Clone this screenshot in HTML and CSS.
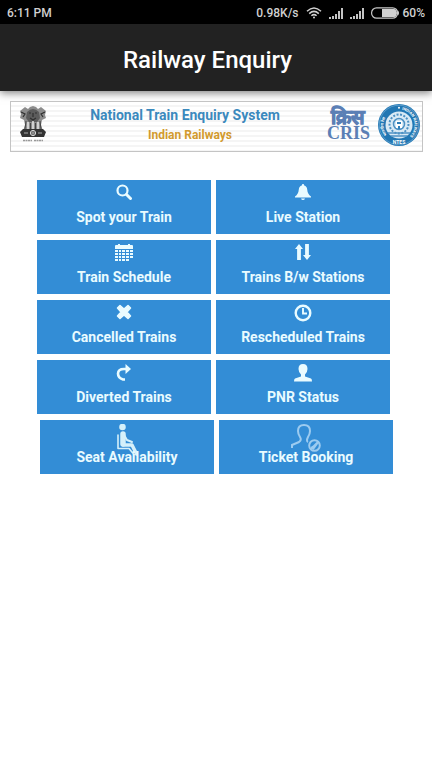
FILE: index.html
```html
<!DOCTYPE html>
<html lang="en">
<head>
<meta charset="utf-8">
<meta name="viewport" content="width=device-width, initial-scale=1">
<title>Railway Enquiry</title>
<link rel="stylesheet" href="styles.css">
</head>
<body>
<div class="status">
  <span class="clock">6:11 PM</span>
  <span>0.98K/s</span>
  <svg class="wifi" width="16" height="12" viewBox="0 0 16 12" fill="none" stroke="#d0d0d0" stroke-width="1.5"><path d="M1 4.300Q8-2.300 15 4.300M3.200 6.600Q8 2.200 12.800 6.600M5.400 8.800Q8 6.400 10.600 8.800"/><circle cx="8" cy="10.500" r="1" fill="#d0d0d0" stroke="none"/></svg>
  <svg class="signal" width="15" height="11" viewBox="0 0 15 11" fill="#c4c4c4"><path d="M0 9h2v2H0zM3 8h2v3H3zM6 6h2v5H6zM9 3h2v8H9zM12 0h2v11h-2z"/></svg>
  <svg class="signal" width="15" height="11" viewBox="0 0 15 11" fill="#c4c4c4"><path d="M0 9h2v2H0zM3 8h2v3H3zM6 6h2v5H6zM9 3h2v8H9zM12 0h2v11h-2z"/></svg>
  <svg class="battery" width="29" height="12" viewBox="0 0 29 12"><rect x=".6" y=".8" width="26" height="10.400" rx="5" fill="none" stroke="#c8c8c8" stroke-width="1.200"/><path d="M11 2h12.500q2.500 1 2.500 4t-2.500 4H11z" fill="#d0d0d0"/><path d="M27 3.500q2 2.500 0 5z" fill="#d0d0d0"/></svg>
  <span>60%</span>
</div>
<header class="bar"><h1>Railway Enquiry</h1></header>
<main>
  <section class="banner">
    <svg class="emblem" width="28" height="38" viewBox="0 0 28 38" role="img" aria-label="State emblem">
      <path d="M1 5l5-4 3 2 2-2 3-1 3 1 2 2 3-2 5 4-1 4 1 3-4 2-1 5 2 6H4l2-6-1-5-4-2 1-4z" fill="#8c8c8c"/>
      <path d="M8 6q6-6 12 0l1 6-3 4h-8l-3-4z" fill="#5c5c5c"/>
      <path d="M2 6l4 2-2 3M26 6l-4 2 2 3M10 7h2M16 7h2M11 12l3 2 3-2M14 7v4" fill="none" stroke="#303030" stroke-width="1.200"/>
      <path d="M9 16v7M14 15v8M19 16v7" stroke="#eee" stroke-width="1.400"/>
      <path d="M7 15l-1 8M11.500 17v6M16.500 17v6M21 15l1 8" stroke="#444" stroke-width="1"/>
      <path d="M4 23h20l3 3-2 5H3l-2-5z" fill="#333"/>
      <circle cx="14" cy="27" r="2.600" fill="none" stroke="#ddd" stroke-width="1"/>
      <path d="M5 27h4M19 27h4M14 25v4M12 27h4" stroke="#aaa" stroke-width="1"/>
      <path d="M4 34.500h9M15 34.500h9" stroke="#999" stroke-width="1.500" stroke-dasharray="2 .5"/>
    </svg>
    <div class="names">
      <h2>National Train Enquiry System</h2>
      <p>Indian Railways</p>
    </div>
    <div class="cris"><span class="hindi" lang="hi">क्रिस</span><span>CRIS</span></div>
    <svg class="seal" width="42" height="42" viewBox="0 0 42 42" role="img" aria-label="NTES">
      <defs><path id="left" d="M9 30.800A15.500 15.500 0 0 1 19.500 5.600"/><path id="right" d="M24 5.800A15.500 15.500 0 0 1 31 32.900"/></defs>
      <circle cx="21" cy="21" r="21" fill="#2277b3"/>
      <circle cx="21" cy="21" r="19.800" fill="none" stroke="#7db4da" stroke-width=".6"/>
      <circle cx="21" cy="21" r="13.500" fill="#d9eaf5"/>
      <g fill="none" stroke="#4d91c3"><circle cx="21" cy="20" r="9.500" stroke-width="2" stroke-dasharray="2 1.500"/><circle cx="21" cy="20" r="5.500" stroke-width="1.500"/><path d="M10 29h22M13 32h16" stroke-width="1.500"/></g>
      <path d="M18 17h6v7h-6z" fill="#fff"/><path d="M19 18h4v2h-4zM20 22h2v3h-2z" fill="#2e7eb8"/>
      <g class="seal-text"><text lang="hi"><textPath href="#left">भारतीय रेल</textPath></text><text><textPath href="#right">INDIAN RAILWAYS</textPath></text><text class="seal-name" x="21" y="40" text-anchor="middle">NTES</text></g>
      <circle cx="21" cy="3.800" r="1" fill="#fff"/>
    </svg>
  </section>
  <nav class="menu">
    <div class="row">
      <button type="button"><svg width="16" height="16" viewBox="0 0 16 16" fill="none" stroke="currentColor"><circle cx="6.500" cy="6.500" r="5" stroke-width="2.200"/><path d="M10.500 10.500l4 4" stroke-width="3" stroke-linecap="round"/></svg><span>Spot your Train</span></button>
      <button type="button"><svg width="16" height="16" viewBox="0 0 16 16" fill="currentColor"><path d="M8 0q1.200 0 1.200 1.400Q12 2.200 12.200 5.500 12.500 10 16 12.500v1H0v-1Q3.500 10 3.800 5.500 4 2.200 6.800 1.400 6.800 0 8 0zM6 14.500h4Q9.500 16 8 16t-2-1.500z"/></svg><span>Live Station</span></button>
    </div>
    <div class="row">
      <button type="button"><svg width="18" height="17" viewBox="0 0 18 17" fill="currentColor"><path d="M1 1h2V0h2v1h8V0h2v1h2q1 0 1 1v3H0V2q0-1 1-1zM0 6h3v2H0zM4 6h2v2H4zM7 6h3v2H7zM11 6h3v2h-3zM15 6h3v2h-3zM0 9h3v2H0zM4 9h2v2H4zM7 9h3v2H7zM11 9h3v2h-3zM15 9h3v2h-3zM0 12h3v2H0zM4 12h2v2H4zM7 12h3v2H7zM11 12h3v2h-3zM15 12h3v2h-3zM0 15h3v2H0zM4 15h2v2H4zM7 15h3v2H7zM11 15h3v2h-3z"/></svg><span>Train Schedule</span></button>
      <button type="button"><svg width="16" height="16" viewBox="0 0 16 16" fill="currentColor"><path d="M4 0l4 5H5.900v11H2.100V5H0zM12 16l4-5h-2.100V0h-3.800v11H8z"/></svg><span>Trains B/w Stations</span></button>
    </div>
    <div class="row">
      <button type="button"><svg width="16" height="16" viewBox="0 0 16 16" fill="currentColor" stroke="currentColor" stroke-linejoin="round"><path d="M4 1.500L8 5l4-3.500L14.500 4 11 8l3.500 4-2.500 2.500L8 11l-4 3.500L1.500 12 5 8 1.500 4z" stroke-width="1.500"/></svg><span>Cancelled Trains</span></button>
      <button type="button"><svg width="18" height="18" viewBox="0 0 18 18" fill="none" stroke="currentColor"><circle cx="9" cy="9" r="7.300" stroke-width="2.400"/><path d="M9 4v5.500h4" stroke-width="1.900"/></svg><span>Rescheduled Trains</span></button>
    </div>
    <div class="row">
      <button type="button"><svg width="16" height="18" viewBox="0 0 16 18"><path d="M9 15.500H7Q2 14 2 9.500 2.200 5 8 5h3" fill="none" stroke="currentColor" stroke-width="2.600"/><path d="M9.500 0l5.500 5-5.500 5z" fill="currentColor"/></svg><span>Diverted Trains</span></button>
      <button type="button"><svg width="18" height="18" viewBox="0 0 18 18" fill="currentColor"><path d="M9 0q4.500 0 4.500 5 0 3-2.500 5.500v2l6 2q1 .5 1 3H0q0-2.500 1-3l6-2v-2Q4.500 8 4.500 5 4.500 0 9 0z"/></svg><span>PNR Status</span></button>
    </div>
    <div class="row shifted">
      <button type="button"><svg class="tall" width="22" height="32" viewBox="0 0 22 32" fill="none" stroke="#d5f0fa" stroke-linecap="round" stroke-linejoin="round"><circle cx="6.500" cy="3" r="3.300" fill="#d5f0fa" stroke="none"/><path d="M7 10v10" stroke-width="5.500"/><path d="M2 11v13.500h11l5 6" stroke-width="1.600"/><path d="M7 21h9l4.500 9" stroke-width="3.500"/><path d="M8 11l3 5 5 2" stroke-width="2"/></svg><span>Seat Availability</span></button>
      <button type="button"><svg class="tall" width="30" height="32" viewBox="0 0 30 32" fill="none" stroke="#9ccbf0" stroke-width="2"><path d="M1 24v-3l7-3q3-2 1-5-2-3-2-6Q7 1 13 1t6 6q0 3-2 6-2 4 0 5"/><circle cx="23.500" cy="21.500" r="5.300"/><path d="M20.500 22.500l2 2 4-5.500M20 25l7-7"/></svg><span>Ticket Booking</span></button>
    </div>
  </nav>
</main>
</body>
</html>
```
FILE: styles.css
```css
* { box-sizing: border-box; }
body { margin: 0; background: #fff; font-family: Roboto, "Noto Sans", sans-serif; }
h1, h2, p { margin: 0; }
.status {
  display: flex; align-items: center; height: 24px; padding: 2px 7px 0;
  background: #000; color: #d0d0d0; font-size: 12px; font-weight: 500;
}
.clock { margin-right: auto; }
.wifi { margin-left: 7px; margin-right: 7px; }
.signal { margin-right: 6px; }
.battery { margin-right: 3px; }
.bar {
  display: flex; align-items: center; justify-content: center;
  height: 67px; padding: 5px 17px 0 0;
  background: #222; color: #fff; box-shadow: 0 2px 8px rgba(0, 0, 0, .5);
}
.bar h1 { font-size: 24px; font-weight: 500; line-height: 32px; }
.banner {
  display: flex; align-items: center; height: 51px; margin: 10px 9px 0 10px; padding: 0 2px 4px 8px;
  border: 1px solid #c4c4c4;
  background: repeating-linear-gradient(#fff 0 3px, #f5f5f5 3px 5px);
}
.names { flex: 1; padding-right: 4px; text-align: center; }
.names h2 { color: #3b89bd; font-size: 14px; line-height: 20px; font-weight: 700; }
.names p { padding-left: 10px; color: #d29a2e; font-size: 12px; line-height: 20px; font-weight: 700; }
.cris {
  display: flex; flex-direction: column; align-items: center; margin-right: 8px;
  color: #5b7fb5; font-family: "Liberation Serif", serif; font-size: 18px; line-height: 16px; font-weight: 700;
}
.hindi { font-size: 20px; -webkit-text-stroke: 1px #5b7fb5; }
.seal-text { fill: #fff; font-size: 4px; font-weight: 700; }
.seal-name { font-size: 5px; }
.menu { display: flex; flex-direction: column; gap: 6px; margin: 28px 42px 0 37px; }
.row { display: grid; grid-template-columns: 1fr 1fr; gap: 5px; }
.shifted { margin: 0 -3px 0 3px; }
.row button {
  display: flex; flex-direction: column; align-items: center; justify-content: space-between;
  height: 54px; padding: 4px 0 7px; border: 0;
  background: #338dd6; color: #e9fbff; font: 700 14px/20px Roboto, sans-serif;
}
.row .tall { flex: none; margin: 0 0 -16px; }
.row span { position: relative; }
```
